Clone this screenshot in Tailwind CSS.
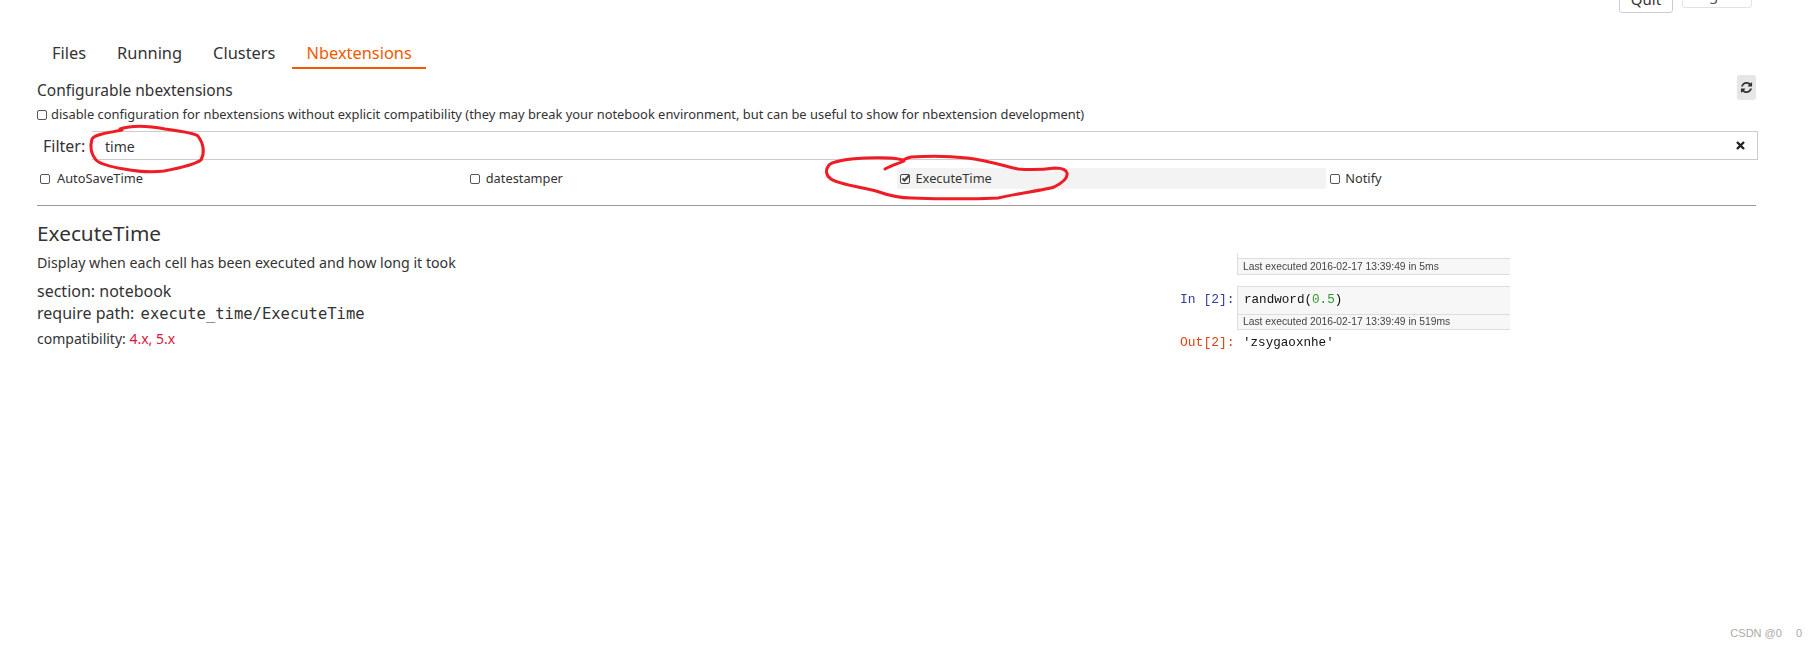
<!DOCTYPE html>
<html lang="en">
<head>
<meta charset="UTF-8">
<title>Nbextensions</title>
<script src="https://cdn.jsdelivr.net/npm/@tailwindcss/browser@4"></script>
</head>
<body class="relative h-[648px] overflow-hidden bg-white font-['Noto_Sans',sans-serif] text-[#333]">

  <!-- top buttons, cut off by the window -->
  <header class="flex h-[13px] items-end justify-end gap-[9px] pr-[65px]">
    <button class="h-[34px] w-[54px] shrink-0 rounded-[3px] border border-[#ccc] pt-[6px] text-[15px] leading-[20px]">Quit</button>
    <button class="mb-[5px] h-[34px] w-[70px] shrink-0 rounded-[3px] border border-[#e3e3e3] pt-[6px] text-[15px] leading-[20px] text-[#555]">Logout</button>
  </header>

  <!-- tabs -->
  <nav class="mt-[25px] flex gap-[3px] pl-[38px] text-[16.4px] leading-[29px]">
    <a class="px-[14px]">Files</a>
    <a class="px-[14px]">Running</a>
    <a class="px-[14px]">Clusters</a>
    <a class="border-b-2 border-[#f05a00] px-[14px] text-[#f05a00]">Nbextensions</a>
  </nav>

  <main class="px-[37px] pr-[59px]">
    <div class="mt-[9px] flex h-[24px] items-center justify-between">
      <h2 class="text-[15.5px] leading-[24px]">Configurable nbextensions</h2>
      <button class="-mt-[6px] mr-[2px] flex h-[25px] w-[19px] items-center justify-center rounded-[3px] bg-[#e6e6e6]">
        <svg class="h-[13px] w-[13px]" viewBox="0 0 1792 1792" fill="#333"><path d="M1639 1056q0 5-1 7-64 268-268 434.5t-478 166.5q-146 0-282.5-55t-243.5-157l-129 129q-19 19-45 19t-45-19-19-45v-448q0-26 19-45t45-19h448q26 0 45 19t19 45-19 45l-137 137q71 66 161 102t187 36q134 0 250-65t186-179q11-17 53-117 8-23 30-23h192q13 0 22.5 9.5t9.5 22.5zm25-800v448q0 26-19 45t-45 19h-448q-26 0-45-19t-19-45 19-45l138-138q-148-137-349-137-134 0-250 65t-186 179q-11 17-53 117-8 23-30 23h-199q-13 0-22.5-9.5t-9.5-22.5v-7q65-268 270-434.5t480-166.5q146 0 284 55.5t245 156.5l130-129q19-19 45-19t45 19 19 45z"/></svg>
      </button>
    </div>

    <label class="mt-[3px] flex h-[20px] items-center gap-[4px] text-[12.9px]">
      <span class="h-[10px] w-[10px] shrink-0 rounded-[2px] border border-[#555]"></span>
      disable configuration for nbextensions without explicit compatibility (they may break your notebook environment, but can be useful to show for nbextension development)
    </label>

    <!-- filter -->
    <div class="mt-[6px] flex h-[29px] items-center">
      <span class="w-[55px] shrink-0 pl-[6px] text-[16px]">Filter:</span>
      <div class="flex h-[29px] flex-1 items-center justify-between border border-l-0 border-[#ccc] pl-[13px] pr-[12px] text-[14px]">
        <span class="mt-[2px]">time</span>
        <svg class="h-[9px] w-[9px]" viewBox="0 0 9 9" stroke="#222" stroke-width="2.4"><path d="M1 1l7 7M8 1L1 8"/></svg>
      </div>
    </div>

    <!-- extension list -->
    <ul class="mt-[8px] grid grid-cols-4 pr-[2px] text-[12.8px]">
      <li class="flex h-[21px] items-center gap-[7px] rounded-[2px] px-[3px]"><span class="h-[10px] w-[10px] rounded-[2px] border border-[#555]"></span>AutoSaveTime</li>
      <li class="flex h-[21px] items-center gap-[6px] rounded-[2px] px-[3px]"><span class="h-[10px] w-[10px] rounded-[2px] border border-[#555]"></span>datestamper</li>
      <li class="flex h-[21px] items-center gap-[5px] rounded-[2px] bg-[#f3f3f3] px-[3px]">
        <svg class="h-[11px] w-[11px]" viewBox="0 0 11 11" fill="none" stroke="#444"><rect x=".5" y="1.5" width="9" height="9" rx="1.5"/><path d="M2.5 5.5l2 2L9.5 2" stroke-width="2"/></svg>
        ExecuteTime
      </li>
      <li class="flex h-[21px] items-center gap-[5px] rounded-[2px] px-[4px]"><span class="h-[10px] w-[10px] rounded-[2px] border border-[#555]"></span>Notify</li>
    </ul>

    <hr class="mr-[2px] mt-[16px] border-t border-[#999]">

    <!-- selected extension -->
    <section class="flex justify-between">
      <div>
        <h3 class="mt-[14px] text-[20.8px] leading-[26px]">ExecuteTime</h3>
        <p class="mt-[7px] text-[14.2px] leading-[20px]">Display when each cell has been executed and how long it took</p>
        <p class="mt-[7px] text-[16px] leading-[22px]">section: notebook</p>
        <p class="text-[16px] leading-[22px]">require path: <code class="ml-[2px] font-['DejaVu_Sans_Mono',monospace] text-[15.5px]">execute_time/ExecuteTime</code></p>
        <p class="mt-[4px] text-[14px] leading-[20px]">compatibility: <span class="text-[#dc143c]">4.x, 5.x</span></p>
      </div>

      <!-- preview picture of the extension -->
      <div class="mr-[248px] mt-[47px] w-[330px] font-['Liberation_Mono',monospace] text-[13px] blur-[0.4px]">
        <div class="ml-[57px] h-[22px] border-b border-l border-[#ddd] pt-[5px]">
          <div class="h-[16px] border-t border-[#ddd] bg-[#f7f7f7] pl-[5px] font-['Liberation_Sans',sans-serif] text-[10.3px] leading-[16px] text-[#444]">Last executed 2016-02-17 13:39:49 in 5ms</div>
        </div>
        <div class="mt-[11px] flex">
          <span class="w-[57px] pt-[5px] leading-[18px] text-[#303f9f]">In [2]:</span>
          <div class="flex-1 border-b border-l border-t border-[#ddd] bg-[#f7f7f7]">
            <div class="h-[28px] border-b border-[#ddd] pl-[6px] text-[12.6px] leading-[27px] text-[#111]">randword(<span class="text-[#2a9d2a]">0.5</span>)</div>
            <div class="h-[14px] bg-[#f7f7f7] pl-[5px] font-['Liberation_Sans',sans-serif] text-[10.3px] leading-[13px] text-[#444]">Last executed 2016-02-17 13:39:49 in 519ms</div>
          </div>
        </div>
        <div class="mt-[5px] flex leading-[16px]">
          <span class="w-[57px] text-[#d84315]">Out[2]:</span>
          <span class="pl-[6px] text-[12.6px] text-[#111]">'zsygaoxnhe'</span>
        </div>
      </div>
    </section>
  </main>

  <!-- red marker annotations over the screenshot -->
  <svg class="pointer-events-none absolute inset-0" width="1817" height="648" fill="none" stroke="#ee1c25" stroke-width="3" stroke-linecap="round" stroke-linejoin="round">
    <path d="M120 129C132 125 150 126 165 129C180 131 195 133 198 136C203 143 205 152 201 160C194 165 180 168 164 171C150 173 135 171 124 169C112 167 100 164 96 160C91 154 90 146 92 139C95 134 108 133 122 130"/>
    <path d="M885 169C892 165 900 163 904 161C902 159 890 157 865 158C845 159 832 162 829 165C825 170 826 176 831 179C838 184 860 187 876 191C890 196 900 198 912 198C940 199 975 199 998 198C1020 193 1045 190 1054 187C1062 183 1068 178 1067 173C1066 169 1062 168 1055 168C1040 170 1030 170 1018 169C1005 166 985 160 967 158C950 156 925 156 911 157C907 158 905 159 903 160"/>
  </svg>

  <!-- site watermark -->
  <div class="absolute bottom-[7px] right-[15px] flex gap-[14px] font-['Liberation_Sans',sans-serif] text-[11px] text-[#aaa]"><span>CSDN @0</span><span>0</span></div>
</body>
</html>
